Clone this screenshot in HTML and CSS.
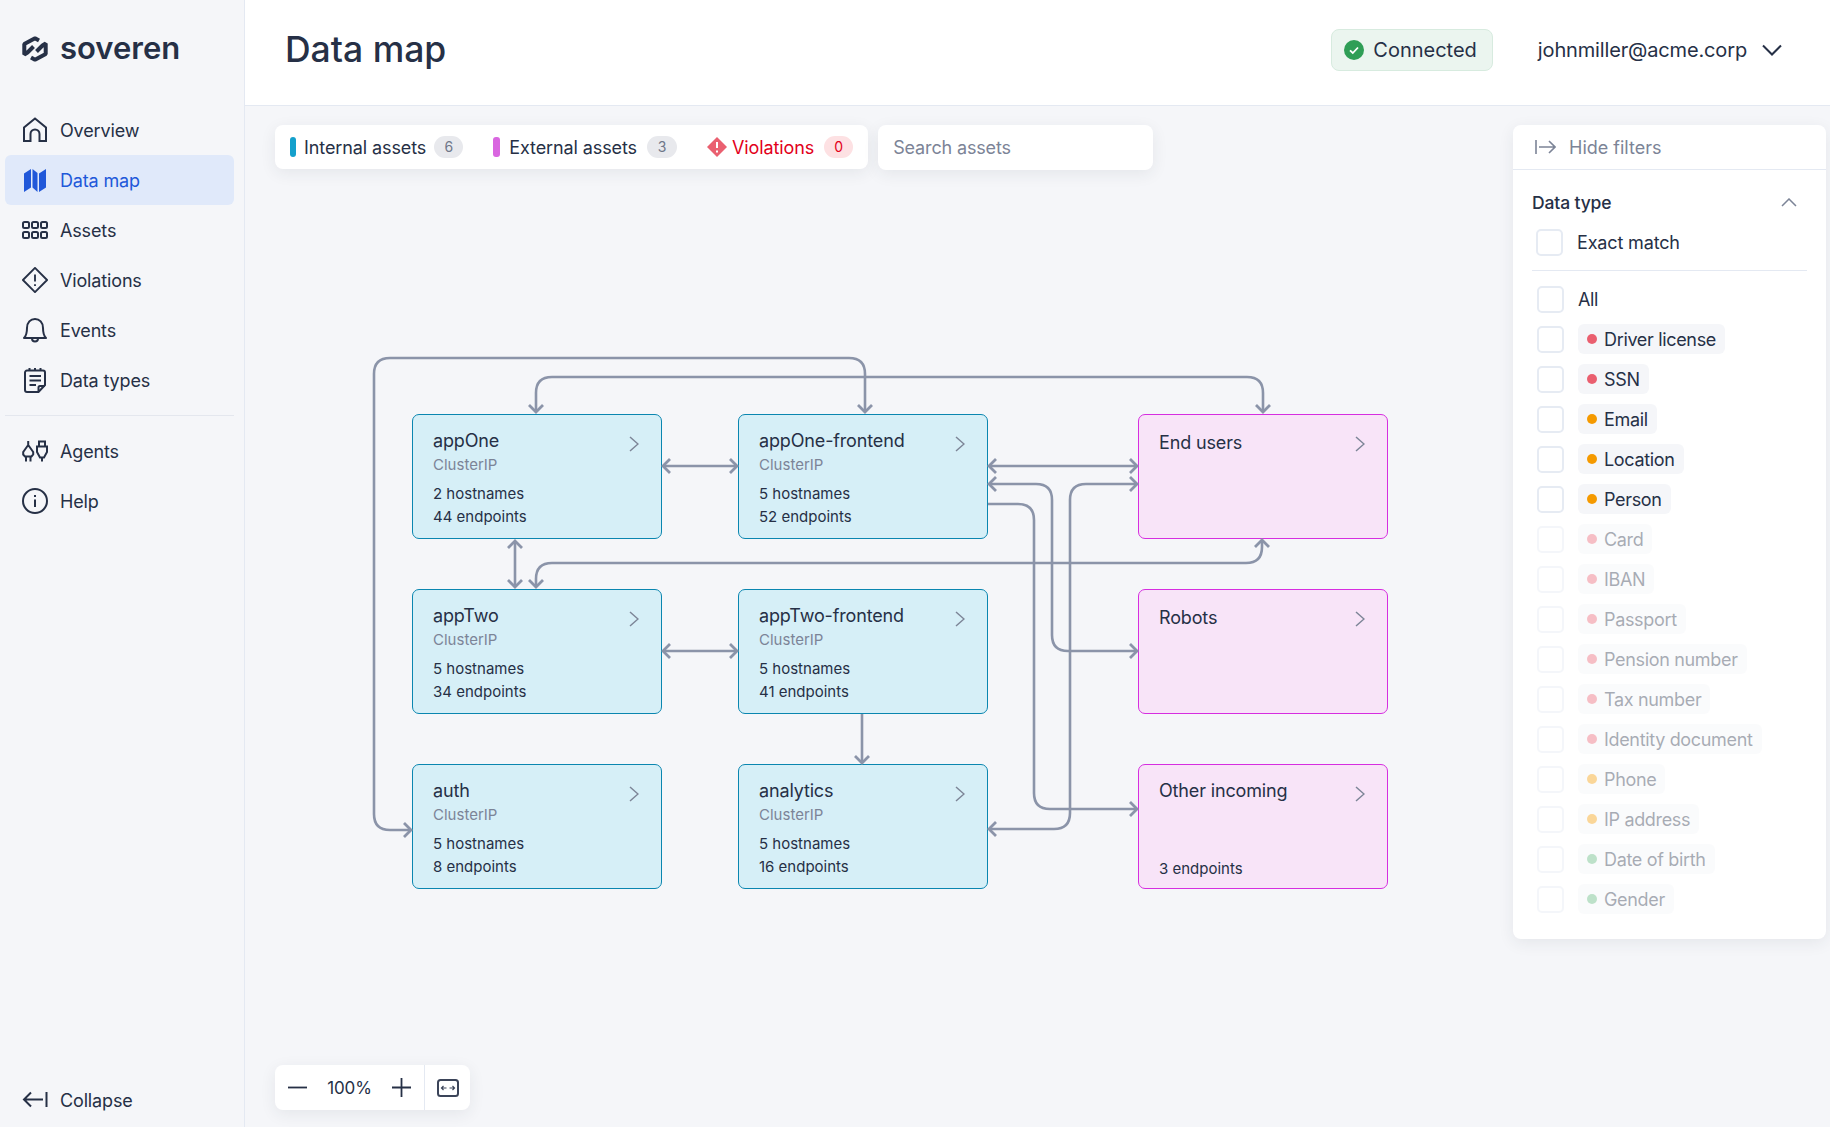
FILE: index.html
```html
<!DOCTYPE html>
<html lang="en">

<head>
  <meta charset="UTF-8">
  <title>Data map</title>
  <link rel="stylesheet" href="styles.css">
</head>

<body>
  <div class="app">
    <aside class="sidebar">
      <div class="logo">
        <svg width="26" height="26" viewBox="0 0 26 26" fill="none" stroke="#263046" stroke-width="4" stroke-linejoin="bevel">
          <path d="M17 4.500L13 2.300L2.300 8V18.500L5.500 16.500L11.500 10.500" />
          <path d="M9 21.500L13 23.700L23.700 18V7.500L20.500 9.500L14.500 15.500" />
        </svg>
        <span class="logo-text">soveren</span>
      </div>
      <nav class="nav">
        <a class="nav-item">
          <svg class="icon" viewBox="0 0 26 26"><path d="M2 24V10.500L13 1.500L24 10.500V24H17.500V17a4.500 4.500 0 0 0-9 0V24Z" /></svg>
          Overview
        </a>
        <a class="nav-item active">
          <svg class="icon" viewBox="0 0 26 26"><path class="solid" d="M2 6.500L9 2V20.500L2 25Z M10.500 2L15.500 6V25L10.500 20.500Z M17 6.500L24 2V20.500L17 25Z" /></svg>
          Data map
        </a>
        <a class="nav-item">
          <svg class="icon" viewBox="0 0 26 26"><rect x="1" y="5" width="6" height="6" rx="1.500" /><rect x="10" y="5" width="6" height="6" rx="1.500" /><rect x="19" y="5" width="6" height="6" rx="1.500" /><rect x="1" y="15" width="6" height="6" rx="1.500" /><rect x="10" y="15" width="6" height="6" rx="1.500" /><rect x="19" y="15" width="6" height="6" rx="1.500" /></svg>
          Assets
        </a>
        <a class="nav-item">
          <svg class="icon" viewBox="0 0 28 28"><path d="M14 1L27 14L14 27L1 14Z" stroke-linejoin="round" /><path d="M14 8V15.500M14 18.500V20.500" /></svg>
          Violations
        </a>
        <a class="nav-item">
          <svg class="icon" viewBox="0 0 26 26"><path d="M2 21C4.500 18.500 5 16 5 11C5 5.500 8.500 2 13 2C17.500 2 21 5.500 21 11C21 16 21.500 18.500 24 21Z" stroke-linejoin="round" /><path d="M10 21.500a3 3 0 0 0 6 0" /></svg>
          Events
        </a>
        <a class="nav-item">
          <svg class="icon" viewBox="0 0 26 26"><path d="M6 3.500H21a2 2 0 0 1 2 2V18L16.500 25H5a2 2 0 0 1-2-2V5.500a2 2 0 0 1 2-2Z" /><path d="M7.500 1V4M13 1V4M18.500 1V4M7.500 9H19M7.500 13.500H19M7.500 18H14M16.500 25V20.500a1.500 1.500 0 0 1 1.500-1.500H23" /></svg>
          Data types
        </a>
        <div class="nav-divider"></div>
        <a class="nav-item">
          <svg class="icon" viewBox="0 0 26 26"><path d="M6.200 3V7L1.200 14V16.500L3 18.500H9.500L11.200 16.500V14L6.200 7M4 18.500V23.500M8.500 18.500V23.500" /><path d="M17 8.500V3.500H23V8.500M15 8.500H25V14L22 19.500H18L15 14ZM20 19.500V23.500" /></svg>
          Agents
        </a>
        <a class="nav-item">
          <svg class="icon" viewBox="0 0 26 26"><circle cx="13" cy="13" r="12" /><path d="M13 11.500V19M13 7V9" /></svg>
          Help
        </a>
      </nav>
      <a class="nav-item collapse">
        <svg class="icon" viewBox="0 0 26 26"><path d="M24.500 5V20M21 12.500H2M9 5.500L2 12.500L9 19.500" /></svg>
        Collapse
      </a>
    </aside>

    <div class="main">
      <header class="header">
        <h1>Data map</h1>
        <div class="connected">
          <svg width="20" height="20" viewBox="0 0 20 20"><circle cx="10" cy="10" r="10" fill="#2f9e56" /><path d="M6 10.300L8.800 13L14 7.500" fill="none" stroke="#fff" stroke-width="1.800" /></svg>
          Connected
        </div>
        <div class="user">
          johnmiller@acme.corp
          <svg width="20" height="12" viewBox="0 0 20 12" fill="none" stroke="#263046" stroke-width="2"><path d="M1 1.500L10 10.500L19 1.500" /></svg>
        </div>
      </header>

      <section class="canvas">
        <div class="toolbar">
          <div class="tabs">
            <div class="tab"><span class="bar internal"></span>Internal assets<span class="count">6</span></div>
            <div class="tab"><span class="bar external"></span>External assets<span class="count wide">3</span></div>
            <div class="tab violations">
              <svg width="20" height="20" viewBox="0 0 20 20"><path d="M10 0L20 10L10 20L0 10Z" fill="#ea6070" /><path d="M10 5V11M10 13.500V15.500" stroke="#fff" stroke-width="2" /></svg>
              Violations<span class="count">0</span>
            </div>
          </div>
          <div class="search">Search assets</div>
        </div>

        <div class="graph">
          <svg class="edges" width="1100" height="600" viewBox="0 0 1100 600">
            <defs>
              <marker id="head" markerUnits="userSpaceOnUse" markerWidth="20" markerHeight="20" viewBox="-10 -10 20 20" refX="0" refY="0" orient="auto-start-reverse">
                <path d="M-7 -7L0 0L-7 7" fill="none" stroke="#8b94a9" stroke-width="2.800" />
              </marker>
            </defs>
            <g class="edge-lines" transform="translate(-340 -340)">
              <path marker-start="url(#head)" marker-end="url(#head)" d="M865 412V374Q865 358 849 358H390Q374 358 374 374V814Q374 830 390 830H411" />
              <path marker-start="url(#head)" marker-end="url(#head)" d="M536 412V393Q536 377 552 377H1247Q1263 377 1263 393V412" />
              <path marker-start="url(#head)" marker-end="url(#head)" d="M663 466H737" />
              <path marker-start="url(#head)" marker-end="url(#head)" d="M989 466H1137" />
              <path marker-start="url(#head)" marker-end="url(#head)" d="M989 484H1036Q1052 484 1052 500V635Q1052 651 1068 651H1137" />
              <path marker-end="url(#head)" d="M988 504H1018Q1034 504 1034 520V793Q1034 809 1050 809H1137" />
              <path marker-start="url(#head)" marker-end="url(#head)" d="M1137 484H1086Q1070 484 1070 500V813Q1070 829 1054 829H989" />
              <path marker-start="url(#head)" marker-end="url(#head)" d="M515 541V587" />
              <path marker-start="url(#head)" marker-end="url(#head)" d="M536 587V579Q536 563 552 563H1246Q1262 563 1262 547V540" />
              <path marker-start="url(#head)" marker-end="url(#head)" d="M663 651H737" />
              <path marker-end="url(#head)" d="M862 714V763" />
            </g>
          </svg>

          <div class="node internal-node n-a1">
            <div class="node-title">appOne</div>
            <div class="node-type">ClusterIP</div>
            <div class="node-meta">2 hostnames<br>44 endpoints</div>
            <svg class="arrow" viewBox="0 0 10 16"><path d="M1 1L9 8L1 15" /></svg>
          </div>
          <div class="node internal-node n-b1">
            <div class="node-title">appOne-frontend</div>
            <div class="node-type">ClusterIP</div>
            <div class="node-meta">5 hostnames<br>52 endpoints</div>
            <svg class="arrow" viewBox="0 0 10 16"><path d="M1 1L9 8L1 15" /></svg>
          </div>
          <div class="node external-node n-c1">
            <div class="node-title">End users</div>
            <svg class="arrow" viewBox="0 0 10 16"><path d="M1 1L9 8L1 15" /></svg>
          </div>
          <div class="node internal-node n-a2">
            <div class="node-title">appTwo</div>
            <div class="node-type">ClusterIP</div>
            <div class="node-meta">5 hostnames<br>34 endpoints</div>
            <svg class="arrow" viewBox="0 0 10 16"><path d="M1 1L9 8L1 15" /></svg>
          </div>
          <div class="node internal-node n-b2">
            <div class="node-title">appTwo-frontend</div>
            <div class="node-type">ClusterIP</div>
            <div class="node-meta">5 hostnames<br>41 endpoints</div>
            <svg class="arrow" viewBox="0 0 10 16"><path d="M1 1L9 8L1 15" /></svg>
          </div>
          <div class="node external-node n-c2">
            <div class="node-title">Robots</div>
            <svg class="arrow" viewBox="0 0 10 16"><path d="M1 1L9 8L1 15" /></svg>
          </div>
          <div class="node internal-node n-a3">
            <div class="node-title">auth</div>
            <div class="node-type">ClusterIP</div>
            <div class="node-meta">5 hostnames<br>8 endpoints</div>
            <svg class="arrow" viewBox="0 0 10 16"><path d="M1 1L9 8L1 15" /></svg>
          </div>
          <div class="node internal-node n-b3">
            <div class="node-title">analytics</div>
            <div class="node-type">ClusterIP</div>
            <div class="node-meta">5 hostnames<br>16 endpoints</div>
            <svg class="arrow" viewBox="0 0 10 16"><path d="M1 1L9 8L1 15" /></svg>
          </div>
          <div class="node external-node n-c3">
            <div class="node-title other">Other incoming</div>
            <div class="node-meta bottom">3 endpoints</div>
            <svg class="arrow" viewBox="0 0 10 16"><path d="M1 1L9 8L1 15" /></svg>
          </div>
        </div>

        <div class="zoom-box">
          <button class="zoom-btn minus"><svg width="19" height="19" viewBox="0 0 19 19"><path d="M0 9.500H19" /></svg></button>
          <span class="zoom-value">100%</span>
          <button class="zoom-btn plus"><svg width="19" height="19" viewBox="0 0 19 19"><path d="M0 9.500H19M9.500 0V19" /></svg></button>
          <button class="zoom-fit"><svg width="22" height="18" viewBox="0 0 22 18"><rect x="1" y="1" width="20" height="16" rx="2.500" /><path class="thin" d="M4.500 9H9.500M6.500 7L4.500 9L6.500 11M12.500 9H17.500M15.500 7L17.500 9L15.500 11" /></svg></button>
        </div>

        <aside class="filters">
          <div class="filters-head">
            <svg width="21" height="16" viewBox="0 0 21 16" fill="none" stroke="#7c8497" stroke-width="1.600"><path d="M1 1V15M4 8H20M14 2L20 8L14 14" /></svg>
            Hide filters
          </div>
          <div class="filters-body">
            <div class="filter-title">
              Data type
              <svg width="16" height="9" viewBox="0 0 16 9" fill="none" stroke="#7c8497" stroke-width="1.500"><path d="M1 8L8 1L15 8" /></svg>
            </div>
            <label class="exact"><span class="box"></span>Exact match</label>
            <div class="filter-divider"></div>
            <ul class="filter-list">
              <li><span class="box"></span>All</li>
              <li><span class="box"></span><span class="chip"><i class="dot red"></i>Driver license</span></li>
              <li><span class="box"></span><span class="chip"><i class="dot red"></i>SSN</span></li>
              <li><span class="box"></span><span class="chip"><i class="dot orange"></i>Email</span></li>
              <li><span class="box"></span><span class="chip"><i class="dot orange"></i>Location</span></li>
              <li><span class="box"></span><span class="chip"><i class="dot orange"></i>Person</span></li>
              <li class="off"><span class="box"></span><span class="chip"><i class="dot red"></i>Card</span></li>
              <li class="off"><span class="box"></span><span class="chip"><i class="dot red"></i>IBAN</span></li>
              <li class="off"><span class="box"></span><span class="chip"><i class="dot red"></i>Passport</span></li>
              <li class="off"><span class="box"></span><span class="chip"><i class="dot red"></i>Pension number</span></li>
              <li class="off"><span class="box"></span><span class="chip"><i class="dot red"></i>Tax number</span></li>
              <li class="off"><span class="box"></span><span class="chip"><i class="dot red"></i>Identity document</span></li>
              <li class="off"><span class="box"></span><span class="chip"><i class="dot orange"></i>Phone</span></li>
              <li class="off"><span class="box"></span><span class="chip"><i class="dot orange"></i>IP address</span></li>
              <li class="off"><span class="box"></span><span class="chip"><i class="dot green"></i>Date of birth</span></li>
              <li class="off"><span class="box"></span><span class="chip"><i class="dot green"></i>Gender</span></li>
            </ul>
          </div>
        </aside>
      </section>
    </div>
  </div>
</body>

</html>
```
FILE: styles.css
```css
* {
  box-sizing: border-box;
}

html,
body {
  margin: 0;
  height: 100%;
  overflow: hidden;
}

body {
  font-family: Inter, "Noto Sans", sans-serif;
  font-size: 18px;
  letter-spacing: -0.15px;
  color: #263046;
  background: #f5f6f9;
}

.app {
  display: flex;
  height: 100vh;
}

/* sidebar */
.sidebar {
  width: 245px;
  flex: none;
  display: flex;
  flex-direction: column;
  padding: 0 10px 2px 5px;
  background: #f5f6f9;
  border-right: 1px solid #e4e9f2;
}

.logo {
  display: flex;
  align-items: center;
  gap: 12px;
  height: 105px;
  padding: 0 0 7px 17px;
}

.logo-text {
  margin-top: -4px;
  font-size: 31px;
  font-weight: 600;
  letter-spacing: 0;
}

.nav {
  flex: 1;
}

.nav-item {
  display: flex;
  align-items: center;
  gap: 12px;
  height: 50px;
  padding-left: 17px;
  border-radius: 6px;
}

.nav-item.active {
  color: #2158d9;
  background: #e0e9fa;
}

.nav-item.collapse {
  flex: none;
  height: 50px;
}

.icon {
  width: 26px;
  height: 26px;
  flex: none;
  fill: none;
  stroke: #263046;
  stroke-width: 2;
}

.active .icon .solid {
  fill: #2158d9;
  stroke: none;
}

.nav-divider {
  height: 1px;
  margin: 10px 0;
  background: #e4e7ee;
}

/* header */
.main {
  flex: 1;
  display: flex;
  flex-direction: column;
  min-width: 0;
}

.header {
  height: 106px;
  flex: none;
  display: flex;
  align-items: center;
  padding: 0 48px 6px 40px;
  background: #fff;
  border-bottom: 1px solid #e4e9f2;
}

h1 {
  margin: 0 auto 0 0;
  font-size: 35.500px;
  font-weight: 500;
  letter-spacing: 0;
}

.connected {
  display: flex;
  align-items: center;
  gap: 9px;
  height: 42px;
  padding: 0 15px 0 12px;
  font-size: 20px;
  letter-spacing: 0;
  background: #ebf5ef;
  border: 1px solid #d7ebdf;
  border-radius: 8px;
}

.user {
  display: flex;
  align-items: center;
  gap: 15px;
  margin-left: 45px;
  font-size: 20px;
}

/* canvas and things lying over it */
.canvas {
  position: relative;
  flex: 1;
}

.toolbar {
  position: absolute;
  top: 19px;
  left: 30px;
  display: flex;
  gap: 10px;
}

.tabs,
.search,
.zoom-box,
.filters {
  background: #fff;
  border-radius: 8px;
  box-shadow: 0 4px 16px rgba(38, 48, 70, 0.08);
}

.tabs {
  display: flex;
  align-items: center;
  gap: 30px;
  height: 44px;
  padding: 0 15px;
  letter-spacing: -0.1px;
}

.tab {
  display: flex;
  align-items: center;
  white-space: nowrap;
}

.bar {
  width: 6px;
  height: 20px;
  margin-right: 8px;
  border-radius: 3px;
}

.bar.internal {
  background: #14a0cc;
}

.bar.external {
  width: 7px;
  margin-right: 9px;
  background: #d966e0;
}

.count {
  width: 29px;
  height: 22px;
  margin-left: 8px;
  font-size: 14px;
  line-height: 21px;
  text-align: center;
  color: #6f7789;
  background: #e8e9ed;
  border-radius: 11px;
}

.count.wide {
  width: 30px;
  margin-left: 10px;
}

.violations {
  gap: 5px;
  color: #e2001a;
}

.violations .count {
  margin-left: 5px;
  color: #e2001a;
  background: #fde1e3;
}

.search {
  display: flex;
  align-items: center;
  width: 275px;
  height: 45px;
  padding-left: 15px;
  color: #7c8497;
}

.graph {
  position: absolute;
  top: 234px;
  left: 95px;
  width: 1100px;
  height: 600px;
}

.edges {
  position: absolute;
  top: 0;
  left: 0;
  z-index: 1;
  pointer-events: none;
}

.edge-lines path {
  fill: none;
  stroke: #8b94a9;
  stroke-width: 2.600;
}

.node {
  position: absolute;
  width: 250px;
  height: 125px;
  padding: 14px 20px 0;
  border-radius: 7px;
  font-size: 15px;
  line-height: 23px;
  letter-spacing: 0;
}

.internal-node {
  background: #d6eff7;
  border: 1px solid #0a86b0;
}

.external-node {
  background: #f8e4f8;
  border: 1px solid #d62ee0;
}

.external-node .node-title {
  margin-top: 2px;
}

.external-node .node-title.other {
  margin-top: 0;
}

.n-a1, .n-a2, .n-a3 { left: 72px; }
.n-b1, .n-b2, .n-b3 { left: 398px; }
.n-c1, .n-c2, .n-c3 { left: 798px; }
.n-a1, .n-b1, .n-c1 { top: 74px; }
.n-a2, .n-b2, .n-c2 { top: 249px; }
.n-a3, .n-b3, .n-c3 { top: 424px; }

.node-title {
  font-size: 18px;
  line-height: 24px;
  letter-spacing: -0.15px;
}

.node-type {
  color: #7c8497;
}

.node-meta {
  margin-top: 6px;
}

.node-meta.bottom {
  position: absolute;
  left: 20px;
  bottom: 8px;
}

.arrow {
  position: absolute;
  top: 21px;
  right: 22px;
  width: 10px;
  height: 16px;
  fill: none;
  stroke: #7d8597;
  stroke-width: 1.500;
}

.zoom-box {
  position: absolute;
  left: 30px;
  bottom: 17px;
  display: flex;
  align-items: center;
  width: 195px;
  height: 45px;
}

.zoom-box button {
  display: flex;
  padding: 0;
  background: none;
  border: none;
}

.zoom-btn svg {
  fill: none;
  stroke: #263046;
  stroke-width: 1.800;
}

.minus {
  margin-left: 13px;
}

.zoom-value {
  width: 85px;
  font-size: 17px;
  text-align: center;
}

.zoom-fit {
  align-items: center;
  height: 45px;
  margin-left: 13px;
  padding-left: 12px !important;
  border-left: 1px solid #e4e9f2 !important;
}

.zoom-fit svg {
  fill: none;
  stroke: #3b4459;
  stroke-width: 2;
}

.zoom-fit .thin {
  stroke-width: 1.200;
}

/* filters */
.filters {
  position: absolute;
  top: 19px;
  left: 1268px;
  width: 313px;
  height: 814px;
}

.filters-head {
  display: flex;
  align-items: center;
  gap: 13px;
  height: 45px;
  padding-left: 22px;
  letter-spacing: 0;
  color: #7c8497;
  border-bottom: 1px solid #e4e9f2;
}

.filters-body {
  padding: 0 19px;
}

.filter-title {
  display: flex;
  align-items: center;
  justify-content: space-between;
  height: 24px;
  margin: 20px 10px 0 0;
  font-weight: 500;
  font-size: 17.500px;
}

.exact {
  display: flex;
  align-items: center;
  gap: 14px;
  height: 27px;
  margin: 15px 0 0 4px;
}

.box {
  width: 27px;
  height: 27px;
  flex: none;
  background: #fff;
  border: 2px solid #e6ebf3;
  border-radius: 5px;
}

.filter-divider {
  height: 1px;
  margin-top: 14px;
  background: #e4e9f2;
}

.filter-list {
  margin: 8px 0 0 5px;
  padding: 0;
  list-style: none;
  letter-spacing: -0.33px;
}

.filter-list li {
  display: flex;
  align-items: center;
  gap: 14px;
  height: 40px;
  white-space: nowrap;
}

.filter-list li.off {
  opacity: 0.4;
}

.chip {
  display: flex;
  align-items: center;
  gap: 7px;
  height: 30px;
  padding: 0 9px;
  background: #f5f6f9;
  border-radius: 6px;
}

.dot {
  width: 10px;
  height: 10px;
  border-radius: 50%;
}

.dot.red {
  background: #ea5f6f;
}

.dot.orange {
  background: #f59a00;
}

.dot.green {
  background: #5cb67a;
}
```
